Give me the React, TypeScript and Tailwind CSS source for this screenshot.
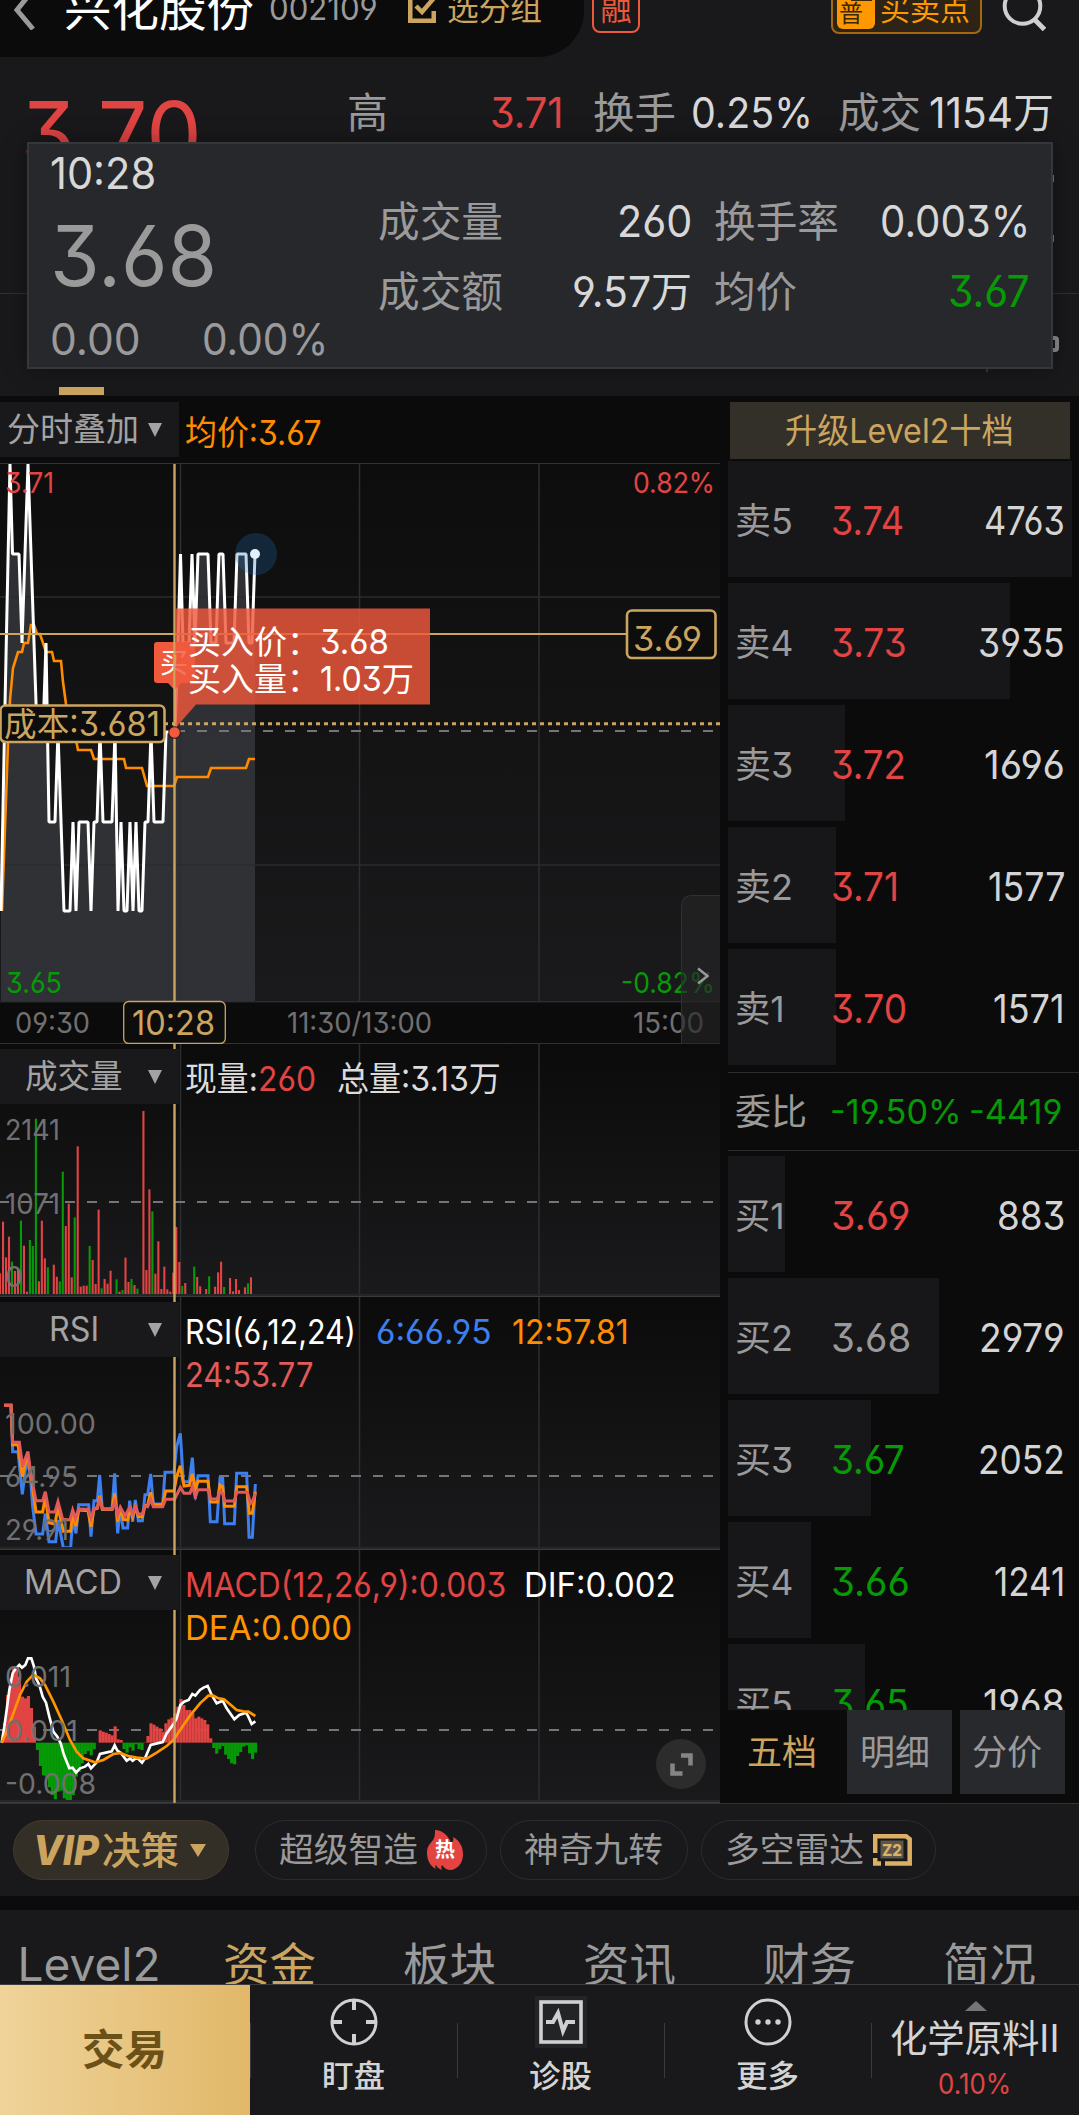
import { useLayoutEffect, useRef, useState } from "react";
import type { ReactNode } from "react";

/* Single-line text condensed or widened to an exact advance width. */
function T({ w, className = "", children }: { w: number; className?: string; children: ReactNode }) {
  const ref = useRef<HTMLSpanElement>(null);
  const [scale, setScale] = useState(1);
  useLayoutEffect(() => {
    if (ref.current) setScale(w / ref.current.offsetWidth);
  }, [w]);
  return (
    <span className={`inline-block shrink-0 whitespace-nowrap ${className}`} style={{ width: w }}>
      <span ref={ref} className="inline-block origin-left" style={{ transform: `translateX(-1px) scaleX(${scale})` }}>
        {children}
      </span>
    </span>
  );
}

const GOLD = "#cba55f";
const RED = "#e04443";
const GREEN = "#069a06";
const ORANGE = "#ff8c00";

/* ---------- chart data ---------- */
const PRICE: [number, number][] = [
  [1, 911], [5, 705], [10, 464], [12.5, 554], [19, 554], [22, 643], [28, 464], [37, 732], [43, 732], [46, 643],
  [49, 822], [55, 822], [58, 732], [64, 911], [70, 911], [73, 822], [76, 911], [79, 822], [88, 822], [91, 911],
  [94, 822], [97, 822], [100, 732], [103, 822], [112, 822], [115, 732], [118, 911], [121, 822], [124, 911],
  [127, 911], [130, 822], [133, 911], [136, 822], [139, 911], [142, 911], [145, 822], [148, 822], [151, 732],
  [154, 822], [163, 822], [166, 732], [175, 732], [178, 643], [180.5, 554], [183, 643], [189, 643], [192, 554],
  [195, 643], [198, 554], [208, 554], [211, 643], [216, 643], [219, 554], [223, 554], [226, 643], [234, 643],
  [237, 554], [246, 554], [249, 643], [252, 643], [255, 554],
];
const AVG: [number, number][] = [
  [2, 911], [8, 743], [10, 700], [13, 668], [18, 652], [22, 652], [24, 643], [28, 643], [31, 625], [34, 625],
  [37, 634], [40, 634], [46, 652], [52, 652], [54, 661], [61, 661], [63, 682], [66, 704], [72, 730], [76, 740],
  [78, 750], [91, 750], [94, 759], [124, 759], [126, 768], [142, 768], [147, 786], [174, 786], [177, 777],
  [208, 777], [211, 768], [246, 768], [249, 759], [255, 759],
];
/* bar tops in thirds of a pixel above the base at 765; negative marks a falling minute */
const VOL = [
  700, 545, 652, 590, -665, 693, 690, -542, 617, 755, -600, -618, -236, 724, 542, 655, -682, 765, 674, 710, -724,
  -395, 558, 491, 712, -532, 319, 740, 737, 737, -618, 660, 732, 509, -745, 717, 731, 692, 763, -718, 755, -750,
  653, 726, -717, 735, -746, 763, 213, 690, 448, -514, 701, 604, 747, 680, 748, 755, 698, 561, 666, -738, 729, 765,
  762, -680, 711, 739, 763, 747, -709, 765, 740, 697, 665, -741, 765, 714, 754, 717, 750, 765, 742, -730, 712, 762,
];
const RSI6 =
  "12,316 33,316 38,455 54,455 67,583 76,510 83,480 92,540 98,620 108,702 128,702 136,640 147,725 167,725 174,660 190,743 212,743 218,655 228,700 236,614 266,614 273,710 282,602 292,602 299,525 307,628 336,628 344,520 353,700 361,625 369,684 383,684 389,602 398,665 406,600 415,662 427,662 435,584 443,584 452,522 460,612 488,612 495,517 522,517 530,440 541,400 550,545 568,545 577,473 586,597 594,527 624,527 631,665 651,665 660,535 668,535 674,671 703,671 710,520 740,520 747,712 757,712 766,552";
const RSI12 =
  "12,316 33,316 38,434 54,434 67,530 76,490 83,465 92,520 108,636 128,636 136,590 147,668 165,672 174,620 190,694 212,694 218,640 228,678 236,630 264,632 273,680 282,628 292,625 299,587 307,628 336,628 344,580 353,665 361,625 370,658 383,660 389,622 398,650 406,620 415,650 427,650 435,618 443,615 452,577 460,614 488,614 497,573 522,573 530,530 541,497 552,558 568,556 577,522 586,565 594,544 624,544 632,606 652,606 660,555 668,560 674,619 703,619 710,560 740,560 748,640 757,640 766,575";
const RSI24 =
  "12,316 33,316 38,427 58,427 68,500 76,475 84,455 92,520 108,602 128,602 136,575 147,636 165,636 174,605 188,658 210,660 218,630 226,655 236,627 264,628 273,655 282,626 292,622 299,600 307,626 336,626 344,605 353,645 361,622 375,648 389,622 398,642 406,620 415,642 427,642 435,618 443,620 452,598 460,620 488,620 497,598 524,598 541,562 552,580 570,580 577,560 586,590 594,569 624,569 632,597 652,597 660,575 668,580 674,603 703,603 710,577 742,577 752,610 757,605 766,580";
const HIST = [
  520, 435, 385, 355, 360, 380, 440, 445, 438, 474, 530, 600, 648, 676, 680, 712, 735, 748, 725, 722, 745, 752, 752,
  735, 680, 665, 640, 612, 603, 616, 598, 578, 541, 545, 548, 552, 556, 529, 568, 570, 597, 608, 592, 602, 583, 597,
  600, 577, 558, 520, 524, 530, 535, 545, 520, 508, 503, 490, 470, 447, 465, 480, 480, 490, 505, 500, 505, 510, 523,
  565, 594, 611, 597, 588, 614, 627, 640, 643, 618, 606, 590, 586, 610, 627, 608,
];
const DIF =
  "5,578 13,530 20,480 28,420 38,370 48,355 58,345 66,353 76,345 84,325 94,325 102,350 108,385 118,405 128,440 138,458 148,500 160,545 172,560 182,580 192,615 208,655 218,653 228,668 240,655 255,650 265,642 273,655 290,637 300,612 335,604 344,586 352,602 362,608 380,632 390,625 398,632 406,626 414,626 426,638 435,625 452,585 488,576 500,550 515,530 522,520 530,505 541,465 552,455 566,450 577,432 586,437 600,420 612,412 623,408 635,435 650,460 668,452 680,475 703,508 718,495 738,488 745,500 755,522 766,514";
const DEA =
  "5,578 20,545 40,490 60,435 80,395 100,374 120,385 135,405 160,455 185,510 210,570 230,605 250,625 285,637 310,630 340,612 362,609 385,618 410,623 440,626 470,608 500,588 520,570 545,533 570,497 600,460 625,437 640,437 655,445 672,448 690,463 710,480 730,484 745,485 766,498";

const pts = (p: [number, number][]) => p.map((q) => q.join(",")).join(" ");

function Label({ x, y, w, fill = "#707072", size = 29, children }: { x: number; y: number; w: number; fill?: string; size?: number; children: string }) {
  return (
    <text x={x} y={y} fill={fill} fontSize={size} textLength={w} lengthAdjust="spacingAndGlyphs">
      {children}
    </text>
  );
}

function Grid({ top, bottom }: { top: number; bottom: number }) {
  return (
    <g stroke="#2d2e30" strokeWidth="1.5">
      <line x1="180.5" x2="180.5" y1={top} y2={bottom} />
      <line x1="359.5" x2="359.5" y1={top} y2={bottom} />
      <line x1="539" x2="539" y1={top} y2={bottom} />
    </g>
  );
}

const Dashes = ({ y }: { y: number }) => (
  <line x1="-1" x2="720" y1={y} y2={y} stroke="#757577" strokeWidth="2" strokeDasharray="10 12" />
);

const Cursor = ({ top, bottom }: { top: number; bottom: number }) => (
  <line x1="174.5" x2="174.5" y1={top} y2={bottom} stroke={GOLD} strokeWidth="2.4" />
);

const Floor = ({ y }: { y: number }) => (
  <>
    <rect x="0" y={y - 2} width="720" height="2" fill="#252628" />
    <rect x="0" y={y} width="720" height="1" fill="#3a3a3d" />
  </>
);

function Selector({ label, w, left }: { label: string; w: number; left: string }) {
  return (
    <div className="flex h-[55px] w-[179px] shrink-0 items-center justify-between bg-[#19191b] pr-[17px] text-[33.5px] leading-none text-[#a3a3a3]">
      <T w={w} className={left}>{label}</T>
      <svg className="h-[14px] w-[14px]" viewBox="0 0 14 14">
        <path d="M0 0H14L7 14Z" fill="#a3a3a3" />
      </svg>
    </div>
  );
}

function PricePane() {
  return (
    <div className="relative h-[581px]">
      <svg className="block h-[581px] w-[720px]" viewBox="0 463 720 581">
        <defs>
          <linearGradient id="paneA" x1="0" y1="0" x2="0" y2="1">
            <stop offset="0" stopColor="#0d0d0d" />
            <stop offset="1" stopColor="#1a1a1c" />
          </linearGradient>
        </defs>
        <rect x="0" y="463" width="720" height="538" fill="url(#paneA)" />
        <polygon points={`1,1001 ${pts(PRICE)} 255,1001`} fill="#35363b" fillOpacity="0.85" />
        <g stroke="#2a2b2d" strokeWidth="1.6">
          <line x1="0" x2="720" y1="597" y2="597" />
          <line x1="0" x2="720" y1="865" y2="865" />
        </g>
        <Grid top={464} bottom={1001} />
        <rect x="0" y="463" width="720" height="1" fill="#333336" />
        <rect x="0" y="1001" width="720" height="1.4" fill="#2c2d2f" />
        <rect x="0" y="1043" width="720" height="1" fill="#333336" />
        <Dashes y={731} />
        <Label x={5} y={743} w={56}>3.68</Label>
        <polyline points={pts(AVG)} fill="none" stroke={ORANGE} strokeWidth="2.6" />
        <polyline points={pts(PRICE)} fill="none" stroke="#fff" strokeWidth="3" strokeLinejoin="bevel" />
        <circle cx="256" cy="554" r="21" fill="#1f6db0" fillOpacity="0.27" />
        <circle cx="255" cy="554" r="5" fill="#e4effc" />
        <Label x={5} y={493} w={49} fill={RED}>3.71</Label>
        <Label x={633} y={493} w={82} fill={RED}>0.82%</Label>
        <Label x={6} y={993} w={56} fill={GREEN}>3.65</Label>
        <Label x={621} y={993} w={94} fill={GREEN}>-0.82%</Label>
        <Label x={15} y={1033} w={75}>09:30</Label>
        <Label x={287} y={1033} w={145}>11:30/13:00</Label>
        <Label x={633} y={1033} w={71}>15:00</Label>
        <line x1="0" x2="626" y1="634" y2="634" stroke={GOLD} strokeWidth="2" />
        <line x1="164" x2="720" y1="723.7" y2="723.7" stroke={GOLD} strokeWidth="3" strokeDasharray="4 4" />
        <path d="M157 642h35a3 3 0 0 1 3 3v35a3 3 0 0 1-3 3h-11l-6.500 7-6.500-7H157a3 3 0 0 1-3-3v-35a3 3 0 0 1 3-3Z" fill="#ee5a3b" />
        <text x="160" y="673" fontSize="28" fill="#fff">买</text>
        <Cursor top={464} bottom={1044} />
        <path d="M175.500 608.500H430V704.500H196L175.500 728Z" fill="#f0593c" fillOpacity="0.82" />
        <g fill="#fff">
          <text x="188" y="653.500" fontSize="33">买入价：</text>
          <Label x={320} y={653.5} w={69} size={33.5} fill="#fff">3.68</Label>
          <text x="188" y="691" fontSize="33">买入量：</text>
          <Label x={320} y={691} w={94} size={33.5} fill="#fff">1.03万</Label>
        </g>
        <circle cx="174.500" cy="732.500" r="5.800" fill="#f55a3c" stroke="#241009" strokeWidth="1" />
        <rect x="0.500" y="705.500" width="164" height="36.500" rx="5" fill="#0d0d0d" stroke={GOLD} strokeWidth="2.600" />
        <Label x={4} y={735.5} w={156} size={33.5} fill={GOLD}>成本:3.681</Label>
        <rect x="627" y="610.500" width="88.500" height="47.500" rx="5" fill="#0d0d0d" stroke={GOLD} strokeWidth="2.600" />
        <Label x={633} y={650.5} w={69} size={34.5} fill={GOLD}>3.69</Label>
        <rect x="123.700" y="1001.500" width="101.600" height="42" rx="5" fill="#0d0d0d" stroke={GOLD} strokeWidth="1.300" />
        <Label x={132} y={1035} w={83} size={33.5} fill={GOLD}>10:28</Label>
      </svg>
      <div className="absolute top-[432px] right-0 flex h-[160px] w-[39px] items-center justify-center rounded-l-[10px] border border-r-0 border-[#303032] bg-[#252527]/65 pt-[2px] pl-1">
        <svg className="h-[18px] w-[12px]" viewBox="0 0 12 18" fill="none" stroke="#98989a" strokeWidth="2.5">
          <path d="M1 1.500 10.500 9 1 16.500" />
        </svg>
      </div>
    </div>
  );
}

function Pane({ children, selector, legend }: { children: ReactNode; selector: ReactNode; legend: ReactNode }) {
  return (
    <div className="relative h-[253px]">
      <div className="absolute inset-0">{children}</div>
      <div className="relative flex pt-[5px]">
        {selector}
        <div className="ml-[7px] pt-[8px] text-[34px] leading-[43px]">{legend}</div>
      </div>
    </div>
  );
}

function PaneSvg({ top, children, labels }: { top: number; children: ReactNode; labels: [string, number, number][] }) {
  return (
    <svg className="block h-[253px] w-[720px]" viewBox={`0 ${top} 720 253`}>
      <defs>
        <linearGradient id={`pane${top}`} x1="0" y1="0" x2="0" y2="1">
          <stop offset="0" stopColor="#0b0b0b" />
          <stop offset="1" stopColor="#1a1a1c" />
        </linearGradient>
      </defs>
      <rect x="0" y={top} width="720" height="253" fill={`url(#pane${top})`} />
      <Grid top={top} bottom={top + 253} />
      {children}
      {labels.map(([t, y, w]) => (
        <Label key={t} x={5} y={y} w={w}>{t}</Label>
      ))}
      <Floor y={top + 252} />
      <Cursor top={top} bottom={top + 253} />
    </svg>
  );
}

function Charts() {
  return (
    <div className="w-[720px] shrink-0">
      <div className="flex h-[67px] pt-[6px]">
        <Selector label="分时叠加" w={132} left="ml-[8px]" />
        <div className="ml-[7px] flex h-[61px] items-center text-[34px] leading-none text-[#ff8c00]">
          <T w={137}>均价:3.67</T>
        </div>
      </div>
      <PricePane />
      <Pane
        selector={<Selector label="成交量" w={98} left="ml-[26px]" />}
        legend={
          <div className="flex text-[#dcdcdc]">
            <T w={73}>现量:</T>
            <T w={58} className="text-[#e04443]">260</T>
            <T w={164} className="ml-[21px]">总量:3.13万</T>
          </div>
        }
      >
        <PaneSvg top={1044} labels={[["2141", 1140, 55], ["1071", 1214, 55], ["0", 1287, 18]]}>
          <Dashes y={1202} />
          {VOL.map((v, i) => {
            const y = 1040 + Math.abs(v) / 3;
            return <rect key={i} x={-1 + i * 2.987} y={y} width="2.1" height={Math.max(0, 1295 - y)} fill={v < 0 ? GREEN : RED} />;
          })}
        </PaneSvg>
      </Pane>
      <Pane
        selector={<Selector label="RSI" w={50} left="ml-[50px]" />}
        legend={
          <>
            <div className="flex">
              <T w={171} className="text-white">RSI(6,12,24)</T>
              <T w={116} className="ml-[20px] text-[#3d7fee]">6:66.95</T>
              <T w={117} className="ml-[20px] text-[#ff8c00]">12:57.81</T>
            </div>
            <T w={128} className="text-[#e05a59]">24:53.77</T>
          </>
        }
      >
        <PaneSvg top={1297} labels={[["100.00", 1434, 91], ["64.95", 1487, 73], ["29.91", 1540, 64]]}>
          <Dashes y={1476} />
          <g transform="translate(0 1300) scale(0.33333)" fill="none" strokeWidth="9">
            <polyline points={RSI6} stroke="#3b7ff0" />
            <polyline points={RSI12} stroke={ORANGE} />
            <polyline points={RSI24} stroke="#e05a59" />
          </g>
        </PaneSvg>
      </Pane>
      <div className="relative">
        <Pane
          selector={<Selector label="MACD" w={98} left="ml-[25px]" />}
          legend={
            <>
              <div className="flex">
                <T w={321} className="text-[#e04443]">MACD(12,26,9):0.003</T>
                <T w={152} className="ml-[18px] text-white">DIF:0.002</T>
              </div>
              <T w={167} className="text-[#ff9500]">DEA:0.000</T>
            </>
          }
        >
          <PaneSvg top={1550} labels={[["0.011", 1687, 66], ["0.001", 1741, 73], ["-0.008", 1794, 91]]}>
            <Dashes y={1730} />
            <g transform="translate(0 1550) scale(0.33333)">
              {HIST.map((v, i) => (
                <rect key={i} x={9 + i * 8.965} y={Math.min(v, 578)} width="9.4" height={Math.abs(v - 578)} fill={v < 578 ? RED : GREEN} />
              ))}
              <polyline points={DIF} fill="none" stroke="#fff" strokeWidth="8" />
              <polyline points={DEA} fill="none" stroke="#ff9500" strokeWidth="8" />
            </g>
          </PaneSvg>
        </Pane>
        <div className="absolute right-[14px] bottom-[14px] flex h-[50px] w-[50px] items-center justify-center rounded-full bg-[#2c2c2d]">
          <svg className="h-[23px] w-[23px]" viewBox="0 0 23 23" fill="none" stroke="#858587" strokeWidth="4.5">
            <path d="M11 2.500H20.500V12.500M2.500 10.500V20.500H12.500" />
          </svg>
        </div>
      </div>
    </div>
  );
}

type Row = { n: string; p: string; pw: number; v: string; vw: number; bar: number; c: string };
const SELLS: Row[] = [
  { n: "卖5", p: "3.74", pw: 73, v: "4763", vw: 81, bar: 344, c: "text-[#e04443]" },
  { n: "卖4", p: "3.73", pw: 76, v: "3935", vw: 87, bar: 282, c: "text-[#e04443]" },
  { n: "卖3", p: "3.72", pw: 75, v: "1696", vw: 81, bar: 117, c: "text-[#e04443]" },
  { n: "卖2", p: "3.71", pw: 68, v: "1577", vw: 77, bar: 108, c: "text-[#e04443]" },
  { n: "卖1", p: "3.70", pw: 76, v: "1571", vw: 72, bar: 108, c: "text-[#e04443]" },
];
const BUYS: Row[] = [
  { n: "买1", p: "3.69", pw: 79, v: "883", vw: 68, bar: 57, c: "text-[#e04443]" },
  { n: "买2", p: "3.68", pw: 80, v: "2979", vw: 86, bar: 211, c: "text-[#9a9a9a]" },
  { n: "买3", p: "3.67", pw: 74, v: "2052", vw: 87, bar: 143, c: "text-[#069a06]" },
  { n: "买4", p: "3.66", pw: 79, v: "1241", vw: 71, bar: 83, c: "text-[#069a06]" },
  { n: "买5", p: "3.65", pw: 78, v: "1968", vw: 82, bar: 137, c: "text-[#069a06]" },
];

function QuoteRow({ r }: { r: Row }) {
  return (
    <div className="relative flex h-[116px] shrink-0 items-center pt-[3px] pl-[8px] text-[39px] leading-none">
      <div className="absolute inset-y-0 left-0 bg-[#17171a]" style={{ width: r.bar }} />
      <T w={r.n.endsWith("1") ? 50 : 58} className="relative text-[36px] text-[#9a9a9a]">{r.n}</T>
      <div className="relative ml-auto flex w-[234px] justify-between">
        <T w={r.pw} className={r.c}>{r.p}</T>
        <T w={r.vw} className="text-[#d4d4d4]">{r.v}</T>
      </div>
      <div className="w-[13px]" />
    </div>
  );
}

function Quotes() {
  return (
    <div className="flex h-[1407px] w-[359px] flex-col pt-[6px] pl-[8px]">
      <div className="mr-[9px] ml-[2px] flex h-[57px] shrink-0 items-center justify-center bg-[#33302a] text-[34px] leading-none text-[#cba55f]">
        <T w={229}>升级Level2十档</T>
      </div>
      <div className="mt-[2px] flex flex-col gap-[6px]">
        {SELLS.map((r) => <QuoteRow key={r.n} r={r} />)}
      </div>
      <div className="mt-[7px] flex h-[79px] shrink-0 items-center border-y border-[#2c2c2e] pl-[8px] text-[34px] leading-none text-[#069a06]">
        <T w={72} className="text-[36px] text-[#9a9a9a]">委比</T>
        <T w={132} className="ml-[23px]">-19.50%</T>
        <T w={94} className="ml-[7px]">-4419</T>
      </div>
      <div className="mt-[5px] flex h-[554px] shrink-0 flex-col gap-[6px] overflow-hidden">
        {BUYS.map((r) => <QuoteRow key={r.n} r={r} />)}
      </div>
      <div className="flex h-[84px] shrink-0 gap-[8px] text-[35px] leading-none">
        <div className="flex w-[111px] items-center pl-[20px] text-[#cba55f]"><T w={70}>五档</T></div>
        <div className="flex w-[105px] items-center bg-[#28292d] pl-[14px] text-[#9a9a9a]"><T w={70}>明细</T></div>
        <div className="flex w-[105px] items-center bg-[#28292d] pl-[13px] text-[#9a9a9a]"><T w={70}>分价</T></div>
      </div>
    </div>
  );
}

function Header() {
  return (
    <div className="relative h-[396px] shrink-0 bg-[#19191b]">
      <div className="flex h-[57px] text-[#cba55f]">
        <div className="h-[57px] w-[584px] rounded-br-[46px] bg-[#0b0b0b]">
          <div className="-mt-[40px] flex h-[97px] items-center leading-none">
            <svg className="ml-[14px] h-[42px] w-[22px]" viewBox="0 0 22 42" fill="none" stroke="#9a9a9a" strokeWidth="5">
              <path d="M19 2 3 22 19 41" />
            </svg>
            <T w={190} className="ml-[29px] text-[47px] text-white">兴化股份</T>
            <T w={109} className="ml-[15px] text-[32px] text-[#9a9a9a]">002109</T>
            <svg className="ml-[29px] h-[28px] w-[28px]" viewBox="0 0 28 28" fill="none" stroke="#cba55f" strokeWidth="4.500">
              <path d="M14 2.250H2.250V25.750H25.750V16M8 11l6 6L26 3" />
            </svg>
            <T w={95} className="ml-[12px] text-[31px]">选分组</T>
          </div>
        </div>
        <div className="-mt-[40px] flex h-[97px] flex-1 items-center leading-none">
          <div className="ml-[8px] flex h-[49px] w-[48px] items-center justify-center rounded-[8px] border-2 border-[#ec5a3c] text-[31px] text-[#ec5a3c]">融</div>
          <div className="ml-[191px] flex h-[50px] w-[151px] items-center rounded-[8px] border-2 border-[#a5690d] bg-[#2d2417] pl-[4px]">
            <div className="relative h-[41px] w-[38px] rounded-[6px] bg-[#ff9800] text-[24px] text-[#3b2606]">
              <span className="absolute top-[14px] left-[2px]">普</span>
              <span className="absolute top-[10px] left-[14px] h-[3px] w-[21px] bg-[#3b2606]" />
            </div>
            <T w={90} className="ml-[6px] text-[30px] text-[#ff9800]">买卖点</T>
          </div>
          <svg className="ml-[19px] h-[46px] w-[46px]" viewBox="0 0 46 46" fill="none" stroke="#cfcfcf" strokeWidth="4">
            <circle cx="21.500" cy="20" r="17.800" />
            <path d="M33 33 43.500 43.500" strokeWidth="5" />
          </svg>
        </div>
      </div>
      <div className="flex h-[112px] items-center text-[42px] leading-none text-[#9a9a9a]">
        <T w={181} className="ml-[22px] pt-[43px] text-[91px] text-[#e04443]">3.70</T>
        <T w={41} className="ml-[145px]">高</T>
        <T w={73} className="ml-[102px] text-[#e04443]">3.71</T>
        <T w={83} className="ml-[30px]">换手</T>
        <T w={122} className="ml-[15px] text-[#d8d8d8]">0.25%</T>
        <T w={83} className="ml-[25px]">成交</T>
        <T w={125} className="ml-[8px] text-[#d8d8d8]">1154万</T>
      </div>
      <div className="mt-[124px] h-px bg-[#303032]" />
      <div className="ml-[59px] h-[8px] w-[45px] translate-y-[93px] bg-[#cba55f]" />
      <div className="absolute top-[175px] right-[25px] h-[7px] w-[2px] bg-[#777]" />
      <div className="absolute top-[235px] right-[25px] h-[7px] w-[2px] bg-[#777]" />
      <div className="absolute top-[336px] right-[20px] h-[16px] w-[16px] rounded-[4px] border-[4px] border-[#8c8c8c]" />
      <div className="absolute top-[350px] right-[91px] h-[22px] w-[2px] bg-[#3a3a3c]" />

      <div className="absolute top-[142px] left-[27px] flex h-[227px] w-[1026px] border-2 border-[#36373a] bg-[#27282c] leading-none shadow-[0_0_22px_rgba(0,0,0,0.35)]">
        <div className="w-[350px] pl-[22px] text-[43.5px] text-[#9a9a9a]">
          <div className="mt-[8px] text-[#d8d8d8]"><T w={106}>10:28</T></div>
          <div className="mt-[18px] text-[84px]"><T w={167}>3.68</T></div>
          <div className="mt-[20px] flex">
            <T w={91}>0.00</T>
            <T w={126} className="ml-[61px]">0.00%</T>
          </div>
        </div>
        <div className="w-[314px] pt-[43px] text-[42px] text-[#9a9a9a]">
          <div className="flex h-[70px] items-center justify-between">
            <T w={125}>成交量</T>
            <T w={75} className="text-[43.5px] text-[#d8d8d8]">260</T>
          </div>
          <div className="flex h-[70px] items-center justify-between">
            <T w={125}>成交额</T>
            <T w={120} className="text-[#d8d8d8]">9.57万</T>
          </div>
        </div>
        <div className="flex-1 pt-[43px] pr-[20px] pl-[22px] text-[42px] text-[#9a9a9a]">
          <div className="flex h-[70px] items-center justify-between">
            <T w={125}>换手率</T>
            <T w={150} className="text-[43.5px] text-[#d8d8d8]">0.003%</T>
          </div>
          <div className="flex h-[70px] items-center justify-between">
            <T w={83}>均价</T>
            <T w={82} className="text-[43.5px] text-[#069a06]">3.67</T>
          </div>
        </div>
      </div>
    </div>
  );
}

function Chips() {
  const chip = "flex h-[60px] items-center rounded-full border";
  return (
    <div className="flex h-[93px] shrink-0 items-start border-t border-[#333336] bg-[#19191b] pt-[16px] pl-[13px] text-[34px] leading-none text-[#9a9a9a]">
      <div className={`${chip} w-[216px] border-[#453b2a] bg-[#332e26] pl-[20px] text-[#cba55f]`}>
        <T w={66} className="text-[41px] font-extrabold italic">VIP</T>
        <T w={77} className="ml-[3px] text-[38px] font-medium">决策</T>
        <svg className="ml-[10px] h-[13px] w-[16px]" viewBox="0 0 16 13"><path d="M0 0H16L8 13Z" fill="#cba55f" /></svg>
      </div>
      <div className={`${chip} ml-[26px] w-[232px] border-[#2c2c2e] pl-[24px]`}>
        <T w={139}>超级智造</T>
        <div className="relative ml-[8px] h-[40px] w-[36px]">
          <svg className="h-[40px] w-[36px]" viewBox="0 0 36 40">
            <path d="M8 0C14 0 21 4 24 13C26 12 27 10 26 7C33 11 36 17 36 24C36 33 31 39 24 40C20 40 17 38 15 35C14 37 14 38 15 40C12 39 10 37 9 35C8 36 8 37 9 39C3 36 0 30 0 23C0 16 3 14 6 10C8 7 8 4 8 0Z" fill="#e34442" />
          </svg>
          <span className="absolute top-[10px] left-[8px] text-[20px] font-bold text-white">热</span>
        </div>
      </div>
      <div className={`${chip} ml-[13px] w-[188px] border-[#2c2c2e] pl-[24px]`}>
        <T w={139}>神奇九转</T>
      </div>
      <div className={`${chip} ml-[13px] w-[235px] border-[#2c2c2e] pl-[24px]`}>
        <T w={139}>多空雷达</T>
        <div className="relative ml-[8px] h-[32px] w-[39px]">
          <svg className="h-[32px] w-[39px]" viewBox="0 0 39 32" fill="none" stroke="#dbb064" strokeWidth="4.500">
            <path d="M2.200 19V2.200H33L36.700 5V29.500H12" />
            <path d="M2.200 24V29.500H8" />
            <rect x="7.500" y="6.500" width="23" height="18" fill="#5b554b" stroke="none" />
          </svg>
          <span className="absolute top-[8px] left-[10px] flex text-[16px] leading-none font-extrabold text-[#dbb064]"><T w={20}>Z2</T></span>
        </div>
      </div>
    </div>
  );
}

function BottomNav() {
  const item = "flex flex-col items-center pt-[13px] text-[31px] font-medium text-[#d4d4d4]";
  const rule = <div className="mt-[38px] h-[55px] w-px bg-[#3a3a3c]" />;
  return (
    <div className="flex h-[131px] shrink-0 border-t border-[#3d3d40] bg-[#19191b] leading-none">
      <div className="flex w-[250px] items-center justify-center bg-gradient-to-r from-[#efd399] to-[#e1b869] text-[42px] font-bold text-[#6b5018]">
        <T w={85}>交易</T>
      </div>
      {rule}
      <div className={`${item} w-[206px]`}>
        <svg className="h-[48px] w-[48px]" viewBox="0 0 48 48" fill="none" stroke="#d0d0d0" strokeWidth="3">
          <circle cx="24" cy="24" r="22" />
          <path d="M24 2V12M24 46V36M2 24H12M46 24H36" strokeWidth="4" />
        </svg>
        <div className="mt-[14px]"><T w={63}>盯盘</T></div>
      </div>
      {rule}
      <div className={`${item} w-[206px]`}>
        <svg className="h-[48px] w-[52px] overflow-visible" viewBox="0 0 52 48" fill="none" stroke="#d0d0d0" strokeWidth="4">
          <rect x="0" y="-2" width="52" height="52" fill="#222426" stroke="none" />
          <rect x="6" y="4" width="40" height="40" strokeWidth="3.600" />
          <path d="M11 24H18L23 15 28 33 32 24H40" />
        </svg>
        <div className="mt-[14px]"><T w={63}>诊股</T></div>
      </div>
      {rule}
      <div className={`${item} w-[206px]`}>
        <svg className="h-[48px] w-[48px]" viewBox="0 0 48 48" fill="none" stroke="#d0d0d0" strokeWidth="3">
          <circle cx="24" cy="24" r="22" />
          <g fill="#d0d0d0" stroke="none">
            <circle cx="14" cy="24" r="2.700" />
            <circle cx="24" cy="24" r="2.700" />
            <circle cx="34" cy="24" r="2.700" />
          </g>
        </svg>
        <div className="mt-[14px]"><T w={63}>更多</T></div>
      </div>
      {rule}
      <div className="flex flex-1 flex-col items-center pt-[16px] text-[#d4d4d4]">
        <svg className="h-[10px] w-[22px]" viewBox="0 0 22 10"><path d="M0 10 11 0 22 10Z" fill="#757577" /></svg>
        <div className="mt-[8px] text-[38px]"><T w={169}>化学原料II</T></div>
        <div className="mt-[13px] text-[28px] text-[#e04443]"><T w={73}>0.10%</T></div>
      </div>
    </div>
  );
}

export default function App() {
  return (
    <div className="flex h-[2115px] w-[1079px] flex-col overflow-hidden bg-[#0b0b0b] font-['Inter','Noto_Sans_CJK_SC',sans-serif] font-normal [font-feature-settings:'cv03','cv04','cv09']">
      <Header />
      <div className="flex h-[1407px] shrink-0">
        <Charts />
        <Quotes />
      </div>
      <Chips />
      <div className="mt-[14px] flex h-[74px] shrink-0 overflow-hidden bg-[#19191b] pt-[31px] text-center text-[46px] leading-[46px] text-[#9a9a9a]">
        <div className="w-[180px]"><T w={143}>Level2</T></div>
        <div className="w-[180px] text-[#cba55f]"><T w={93}>资金</T></div>
        <div className="w-[180px]"><T w={93}>板块</T></div>
        <div className="w-[180px]"><T w={93}>资讯</T></div>
        <div className="w-[180px]"><T w={93}>财务</T></div>
        <div className="w-[179px]"><T w={93}>简况</T></div>
      </div>
      <BottomNav />
    </div>
  );
}
